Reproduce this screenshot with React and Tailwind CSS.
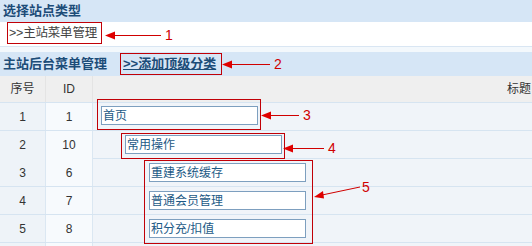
import React from 'react'

const FONT = { fontFamily: '"Liberation Sans", "Noto Sans CJK SC", sans-serif' }

const ROWS = [
  { n: 1, id: 1, title: '首页' },
  { n: 2, id: 10, title: '常用操作' },
  { n: 3, id: 6, title: '重建系统缓存' },
  { n: 4, id: 7, title: '普通会员管理' },
  { n: 5, id: 8, title: '积分充/扣值' },
]

function Arrow({ w }) {
  return (
    <svg width={w} height="9" viewBox={`0 0 ${w} 9`} className="block shrink-0">
      <polygon points="0,4.5 10,0.5 10,8.5" fill="#e00000" />
      <line x1="9" y1="4.5" x2={w} y2="4.5" stroke="#d00000" strokeWidth="1" />
    </svg>
  )
}

function Num({ children }) {
  return <span className="ml-[4px] text-[14px] leading-none text-[#d00000]">{children}</span>
}

function TitleInput({ value }) {
  return (
    <div className="flex h-[19px] w-[157px] shrink-0 items-center border border-[#7d9fbf] bg-white pl-[1px] text-[12px] leading-none whitespace-nowrap text-[#1d5a86]">
      {value}
    </div>
  )
}

function TitleCell({ row }) {
  if (row.n === 1) {
    return (
      <div className="flex items-start pl-[4px]">
        <div className="relative mt-[-4px] border border-red-700 pb-[4px] pl-[3px] pr-[2px] pt-[1px]">
          <div className="h-[5px]" />
          <TitleInput value={row.title} />
        </div>
        <div className="mt-[5px] flex items-center">
          <Arrow w={38} />
          <Num>3</Num>
        </div>
      </div>
    )
  }
  if (row.n === 2) {
    return (
      <div className="flex items-start pl-[28px]">
        <div className="relative mt-[2px] border border-red-700 pb-[4px] pl-[3px] pr-[2px] pt-[1px]">
          <TitleInput value={row.title} />
        </div>
        <div className="mt-[10px] flex items-center">
          <div className="-ml-[2px]">
            <Arrow w={41} />
          </div>
          <Num>4</Num>
        </div>
      </div>
    )
  }
  return (
    <div className="flex items-center pl-[56px]">
      <TitleInput value={row.title} />
    </div>
  )
}

export default function App() {
  return (
    <div className="relative h-[246px] w-[532px] overflow-hidden bg-[#f0f4f9] text-[#333]" style={FONT}>
      <div className="flex h-[22px] items-center bg-[#d6e6f6] pl-[3px] text-[13px] font-bold text-[#1c4c78]">
        选择站点类型
      </div>

      <div className="flex h-[24px] items-start bg-white">
        <div className="ml-[7px] flex h-[22px] w-[95px] items-center whitespace-nowrap border border-red-700 pl-[1px] text-[12.5px] tracking-[-0.2px] text-[#444]">
          &gt;&gt;主站菜单管理
        </div>
        <div className="mt-[6px] flex items-center">
          <div className="ml-[3px]">
            <Arrow w={56} />
          </div>
          <Num>1</Num>
        </div>
      </div>

      <div className="h-[6px] border-t border-[#d9e6f3] bg-[#f3f8fc]" />

      <div className="flex h-[24px] items-center bg-[#d6e6f6] pl-[3px] text-[13px] font-bold text-[#1c4c78]">
        <span className="whitespace-nowrap">主站后台菜单管理</span>
        <div className="ml-[13px] flex h-[22px] w-[102px] items-center whitespace-nowrap border border-red-700 pl-[2px]">
          <a className="text-[#1c4c78] underline">&gt;&gt;添加顶级分类</a>
        </div>
        <div className="flex items-center font-normal">
          <Arrow w={48} />
          <Num>2</Num>
        </div>
      </div>

      <div className="grid h-[27px] grid-cols-[46px_47px_1fr] border-b border-[#d6e4f1] bg-[#efefef] text-[12px] text-[#333]">
        <div className="flex items-center justify-center border-r border-[#e4e4e4]">序号</div>
        <div className="flex items-center justify-center border-r border-[#e4e4e4]">ID</div>
        <div className="flex items-center justify-end pr-[1px]">标题</div>
      </div>

      {ROWS.map((row) => (
        <div
          key={row.n}
          className="grid h-[28px] grid-cols-[46px_47px_1fr] border-b border-[#d6e4f1] text-[12px] text-[#333]"
        >
          <div className="flex items-center justify-center border-r border-[#dbe7f2] bg-[#eef3f8]">{row.n}</div>
          <div className="flex items-center justify-center border-r border-[#dbe7f2] bg-[#f7fafd]">{row.id}</div>
          <TitleCell row={row} />
        </div>
      ))}

      <div className="grid h-[4px] grid-cols-[46px_47px_1fr]">
        <div className="border-r border-[#dbe7f2] bg-[#eef3f8]" />
        <div className="border-r border-[#dbe7f2] bg-[#f7fafd]" />
        <div />
      </div>

      {/* annotation 5 over rows 3-5 */}
      <div className="pointer-events-none absolute left-[144px] top-[160px] h-[84px] w-[169px] border border-red-700" />
      <svg width="48" height="14" viewBox="0 0 48 14" className="absolute left-[313px] top-[185px]">
        <polygon points="1,12 10,6 11,13.5" fill="#e00000" />
        <line x1="9" y1="10" x2="47" y2="2" stroke="#d00000" strokeWidth="1" />
      </svg>
      <span className="absolute left-[362px] top-[180px] text-[14px] leading-none text-[#d00000]">5</span>
    </div>
  )
}
